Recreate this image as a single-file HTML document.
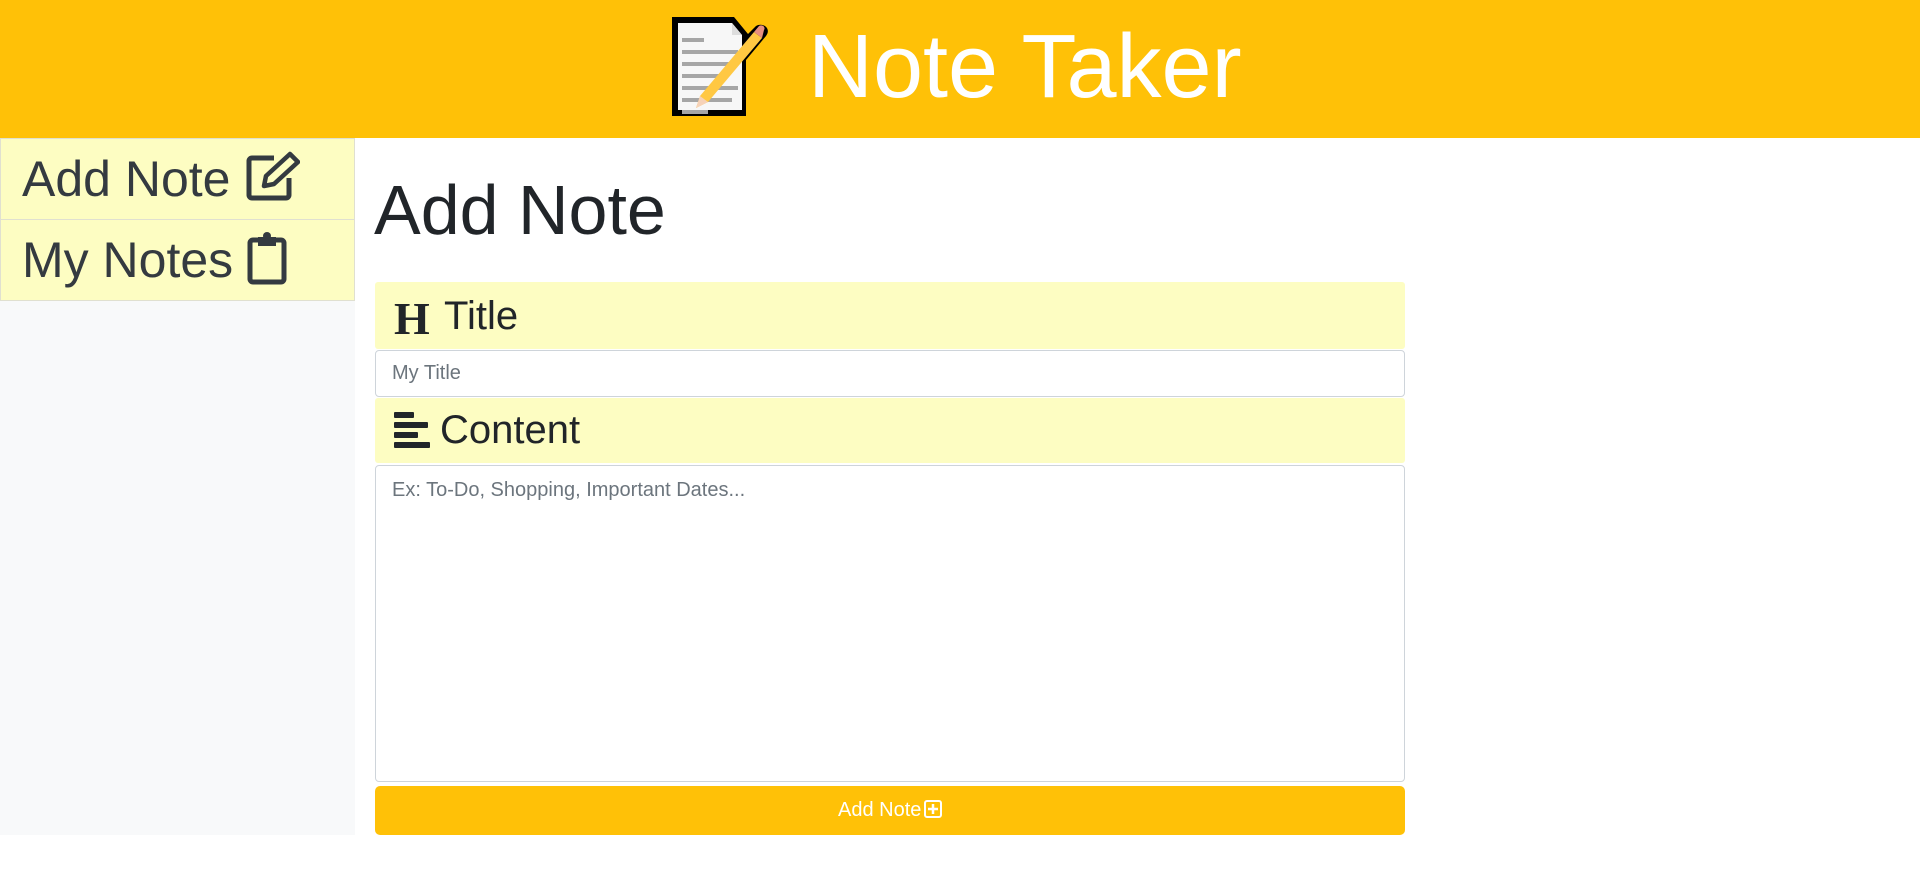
<!DOCTYPE html>
<html><head><meta charset="utf-8"><style>
body{margin:0;width:1920px;height:893px;background:#fff;font-family:"Liberation Sans",Arial,sans-serif;position:relative;overflow:hidden}
.hdr{position:absolute;left:0;top:0;width:1920px;height:138px;background:#ffc107}
.hdr .t{position:absolute;left:808px;top:7px;font-size:90px;color:#fff;line-height:120px}
.side{position:absolute;left:0;top:138px;width:355px;height:697px;background:#f8f9fa}
.item{position:absolute;left:0;width:353px;height:80px;background:#fdfdc2;border:1px solid #e0e0d0;color:#343a40;font-size:50px;line-height:80px}
.item span{position:absolute;left:21px;top:0px}
h1{position:absolute;left:374px;top:168px;margin:0;font-weight:normal;font-size:70px;line-height:84px;color:#212529}
.lab{position:absolute;left:375px;width:1030px;background:#fdfdc2;color:#212529;font-size:40px;border-radius:3px}
.box{position:absolute;left:375px;width:1028px;border:1px solid #ced4da;border-radius:4px;background:#fff;color:#6c757d;font-size:20px}
.btn{position:absolute;left:375px;top:786px;width:1030px;height:49px;background:#ffc107;border-radius:5px;color:#fff;font-size:20px;text-align:center;line-height:49px}
</style></head><body>
<div class="hdr">
<svg style="position:absolute;left:668px;top:14px" width="106" height="104" viewBox="0 0 106 104">
<path d="M4 3H66L80 20 88 12C94 8 104 14 98 22L78 46V102H4Z" fill="#000"/>
<path d="M10 9H64L74 21V96H10Z" fill="#f7f7f7"/>
<path d="M64 9V21H74Z" fill="#ddd"/>
<g stroke="#a6a6a6" stroke-width="4"><path d="M14 26H36M14 38H70M14 50H66M14 62H60M14 74H70M14 86H64M14 98H40"/></g>
<path d="M28 94L32 82 86 18 94 24 40 88Z" fill="#ffc843"/>
<path d="M86 18L91 12C94 10 98 13 96 16L94 24Z" fill="#e88f80"/>
<path d="M28 94L32 82 40 88Z" fill="#f6d2b8"/>
</svg>
<div class="t">Note Taker</div>
</div>
<div class="side">
<div class="item" style="top:0"><span>Add Note <svg width="56" height="52" viewBox="0 0 56 52" style="vertical-align:-6px"><path d="M30 8H8a3 3 0 0 0-3 3v34a3 3 0 0 0 3 3h34a3 3 0 0 0 3-3V28" fill="none" stroke="#343a40" stroke-width="5"/><path d="M20 36l2-10L46 4l8 8-24 22z" fill="none" stroke="#343a40" stroke-width="4.5" stroke-linejoin="round"/></svg></span></div>
<div class="item" style="top:81px"><span>My Notes <svg width="40" height="54" viewBox="0 0 40 54" style="vertical-align:-8px"><rect x="3" y="9" width="34" height="42" rx="3" fill="none" stroke="#343a40" stroke-width="5"/><rect x="11" y="6" width="18" height="9" fill="#343a40"/><circle cx="20" cy="5" r="4" fill="#343a40"/></svg></span></div>
</div>
<h1>Add Note</h1>
<div class="lab" style="top:282px;height:67px"><span style="position:absolute;left:19px;top:10px;font-family:'Liberation Serif',serif;font-weight:bold;font-style:normal;font-size:46px">H</span><span style="position:absolute;left:69px;top:12px">Title</span></div>
<div class="box" style="top:350px;height:45px"><span style="position:absolute;left:16px;top:11px">My Title</span></div>
<div class="lab" style="top:398px;height:65px"><svg style="position:absolute;left:19px;top:14px" width="38" height="38" viewBox="0 0 38 38"><g fill="#212529"><rect x="0" y="0" width="20" height="6" rx="1"/><rect x="0" y="10" width="34" height="6" rx="1"/><rect x="0" y="20" width="24" height="6" rx="1"/><rect x="0" y="30" width="36" height="6" rx="1"/></g></svg><span style="position:absolute;left:65px;top:10px">Content</span></div>
<div class="box" style="top:465px;height:315px"><span style="position:absolute;left:16px;top:13px">Ex: To-Do, Shopping, Important Dates...</span></div>
<div class="btn">Add Note <svg width="18" height="18" viewBox="0 0 18 18" style="vertical-align:-2px;margin-left:-3px"><rect x="1" y="1" width="16" height="16" rx="2" fill="none" stroke="#fff" stroke-width="2"/><path d="M9 4v10M4 9h10" stroke="#fff" stroke-width="2.5"/></svg></div>
</body></html>
